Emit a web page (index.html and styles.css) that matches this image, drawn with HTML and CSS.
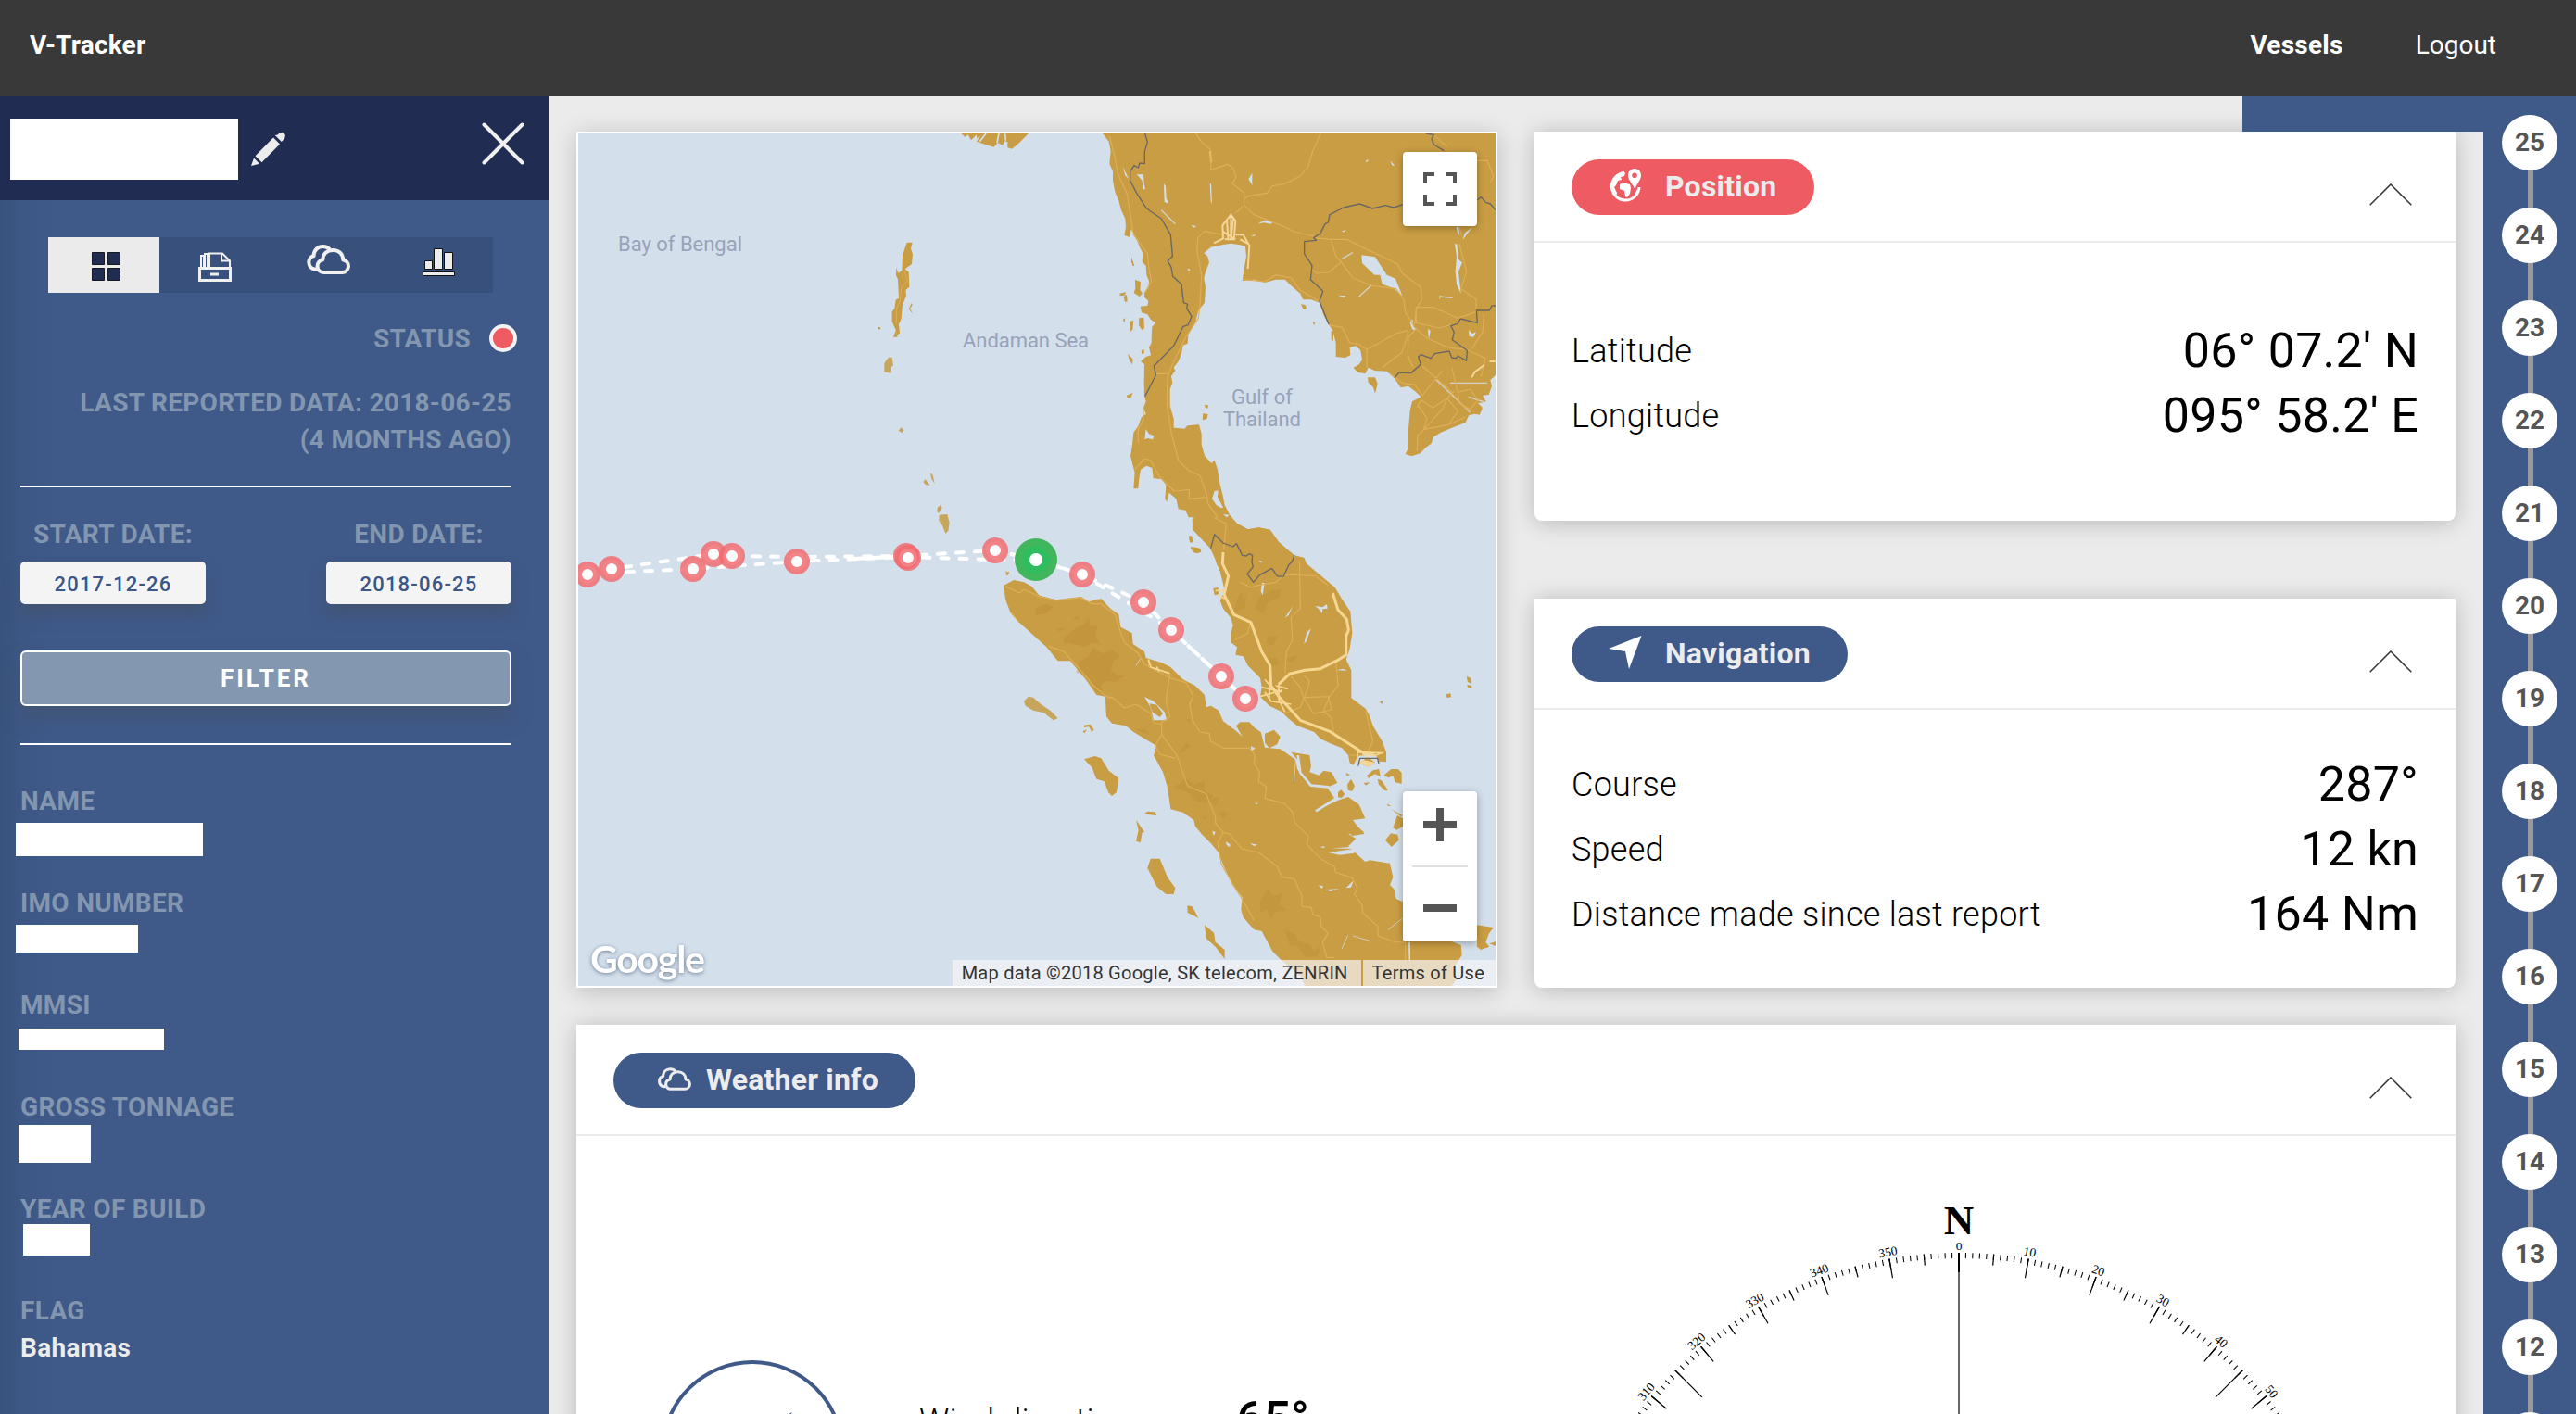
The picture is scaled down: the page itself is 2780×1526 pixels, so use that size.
FILE: index.html
```html
<!DOCTYPE html>
<html lang="en">
<head>
<meta charset="utf-8">
<title>V-Tracker</title>
<link rel="stylesheet" href="styles.css">
</head>
<body>
<svg class="defs" width="0" height="0" aria-hidden="true">
  <symbol id="clouds" viewBox="0 0 48 32">
    <path d="M12 26.500H9.500A7.500 7.500 0 0 1 8.500 12C8.800 6 13 2 18.500 2c3.200 0 5.800 1.200 7.500 3.500" fill="none" stroke="currentColor" stroke-width="4"/>
    <path d="M19 30a6.800 6.800 0 0 1-.8-13.500C18.500 10 23 6 29.500 6s10.500 4.500 10.800 10.500A6.800 6.800 0 0 1 39 30z" fill="none" stroke="currentColor" stroke-width="4" stroke-linejoin="round"/>
  </symbol>
  <symbol id="chevron" viewBox="0 0 46 24">
    <path d="M.7 23.300 23 1l22.300 22.300" fill="none" stroke="#333" stroke-width="1.500"/>
  </symbol>
</svg>

<header class="topbar">
  <span class="brand">V-Tracker</span>
  <nav class="topnav"><a class="active">Vessels</a><a>Logout</a></nav>
</header>

<div class="layout">
  <aside class="sidebar">
    <div class="side-head">
      <div class="blank vessel"></div>
      <svg class="pencil" viewBox="0 0 37 37"><path d="M28.500 3.500C32 .2 34 0 35.500 1.600c2 2 2 4.600-1.500 8.100l-1.200 1.400-7-7zM24 6.500l7 7-19.500 19.700-7-7zM3 28.500l6.200 6.200L0 37z" fill="#ececec"/></svg>
      <svg class="close" viewBox="0 0 46 46"><path d="M2.500 2.500l41 41M43.500 2.500l-41 41" stroke="#f0f0f0" stroke-width="4" stroke-linecap="round"/></svg>
    </div>
    <div class="tabs">
      <div class="tab on"><svg width="32" height="32" viewBox="0 0 32 32"><g fill="#212c52" stroke="#15181f"><path d="M.5.5h13v13H.5zM17.500.5h13v13h-13zM.5 17.500h13v13H.5zM17.500 17.500h13v13h-13z"/></g></svg></div>
      <div class="tab"><svg width="36" height="32" viewBox="0 0 36 32"><g fill="none" stroke="#f0f0f0" stroke-width="2"><path d="M1.500 17.500h33v13h-33zM13 24h9" stroke-width="3"/><path d="M3 17V4h3v13M7 17V2h3v15M12 17V1.500h14l8 8V17M25 1.500v8h8"/></g></svg></div>
      <div class="tab raised"><svg width="48" height="32"><use href="#clouds"/></svg></div>
      <div class="tab raised"><svg width="36" height="30" viewBox="0 0 36 30"><g fill="#ececec" stroke="#111"><path d="M2.500 13.500h8v9h-8zM12.500.5h9v22h-9zM23.500 4.500h9v18h-9zM.5 25.500h34v4H.5z"/></g></svg></div>
    </div>
    <div class="status"><span>STATUS</span><i class="dot"></i></div>
    <p class="reported">LAST REPORTED DATA: 2018-06-25<br>(4 MONTHS AGO)</p>
    <hr class="rule">
    <div class="dates">
      <div class="date"><span>START DATE:</span><div class="field">2017-12-26</div></div>
      <div class="date"><span>END DATE:</span><div class="field">2018-06-25</div></div>
    </div>
    <button class="filter">FILTER</button>
    <hr class="rule second">
    <dl class="facts">
      <div class="fact"><dt>NAME</dt><dd class="blank b-name"></dd></div>
      <div class="fact"><dt>IMO NUMBER</dt><dd class="blank b-imo"></dd></div>
      <div class="fact"><dt>MMSI</dt><dd class="blank b-mmsi"></dd></div>
      <div class="fact"><dt>GROSS TONNAGE</dt><dd class="blank b-gross"></dd></div>
      <div class="fact"><dt>YEAR OF BUILD</dt><dd class="blank b-year"></dd></div>
      <div class="fact"><dt>FLAG</dt><dd>Bahamas</dd></div>
    </dl>
  </aside>

  <main class="main">
    <div class="notch"></div>
    <section class="map">
      <svg class="chart" viewBox="624 144 990 920">
        <rect x="624" y="144" width="990" height="920" fill="#d3dfeb"/>
        <!-- Indochina, Andaman and the gulf -->
        <g transform="translate(1120 130) scale(.33333)">
          <g fill="#c99d43">
            <path d="M210 42 230 68 236 100 232 140 243 165 243 195 250 232 262 260 270 290 283 318 285 345 280 372 298 378 302 352 318 380 330 410 340 430 338 458 350 470 352 500 360 520 358 542 345 560 345 572 358 584 355 600 332 602 336 622 355 628 366 645 382 655 370 668 368 700 368 720 360 735 366 760 350 765 333 780 345 790 344 850 345 892 350 910 342 930 350 950 335 962 325 990 310 1010 306 1050 300 1085 306 1110 314 1140 310 1192 325 1192 328 1160 333 1130 352 1118 370 1125 374 1158 400 1162 415 1180 412 1225 418 1235 425 1205 448 1225 455 1258 478 1262 488 1285 505 1285 500 1320 520 1335 540 1360 558 1372 570 1395 580 1440H870L862 1418 830 1408 815 1395 780 1365 752 1325 715 1318 680 1324 645 1305 620 1275 605 1245 598 1210 590 1180 582 1130 572 1100 562 1110 540 1085 530 1050 530 1015 522 985 485 988 475 998 440 995 440 965 428 925 428 870 436 850 432 828 445 810 440 800 455 780 465 755 470 728 485 722 487 695 500 670 510 655 520 615 540 590 543 540 538 510 545 485 555 460 550 440 538 430 560 410 600 402 625 398 655 403 672 408 675 440 668 480 662 520 700 515 735 525 770 515 800 515 820 535 850 560 858 580 885 580 912 590 925 630 942 660 955 680 965 720 965 765 995 768 1012 760 1010 735 1030 730 1045 745 1050 775 1040 790 1022 800 1035 815 1060 820 1070 800 1090 810 1130 812 1155 835 1175 865 1200 860 1225 880 1240 895 1212 910 1205 940 1200 1000 1200 1060 1190 1080 1210 1087 1238 1078 1255 1060 1275 1045 1280 1025 1305 1010 1340 995 1385 978 1395 955 1415 950 1430 953 1440 930 1425 915 1452 912 1440 890 1460 888 1470 860 1465 840 1482 825V42z"/>
            <path d="M303 442l10 28-5 2-5-14zM315 515l18 8-2 25 8 12-10 10-18-12 5-15zM265 560l20-4-3 10-15 2zM278 570l10-6 2 22-8 2zM328 640l15-2 2 35-8 5-10-15zM300 650l10-3-3 30-8 8zM275 645l8-5-2 14zM292 755l16 18-2 18-12-22zM288 890l20-8-6 14-12 4zM335 745l8-4 2 12-8 4zM540 920l12 2-2 10-8-2zM535 948l16 4-4 14-14 4zM490 1345l8 0 4 18-6 5-6-12zM495 1380l30 5 4 12-16 3-15-10zM852 595l14 2 4 12-10 3zM890 652l8 2-4 10zM1068 832l24 0 8 20-8 32-6-20-16-16zM950 680l8 5-2 30-6-5z"/>
          </g>
          <g fill="#d3dfeb">
            <path d="M1048 436l44 6 38 58 28 12 22 56-30-26-35-12-7-30-18 0-40-38zM1350 400h7l5 50 12 10-12 30 8 70-14-30-4-40 4-50zM1355 345h8l2 28-6-10zM1407 346l-32 40 8-22zM556 100l5 0 2 35-5 0zM557 205l4 0 3 65-4-8zM682 190l12-20v40zM408 205l6 8 2 38 8 18-14-5zM320 175l22 0 2 30 4 18-8 0-2-28-10-12zM275 150l20 40-12-12zM572 1200l12-2-2 20 18 35-6 2-16-10-14-20zM600 1275l20 2-8 8zM350 1000l10 15 16 6-4 12-16-4-10 4zM712 335l20-12 28 4-4 8-25-4zM690 375l18-8-8 8zM495 338l18 4-6 5zM972 566l26 2-8 5zM985 358l14-4-10 8zM1140 130l16 16-8 0zM1062 130l10-4-8 10zM484 480l10 2-6 6zM1205 655l8-12 2 24 14 10-16 0zM1263 675l8 6-5 28zM1395 678l12 12 12-5-8 16-14-2zM1300 580l0-12 42 4v4l-38-4z"/>
            <path d="M400 290l45 45M984 448l36-20M1040 570l40-36M1290 840l110 105M1335 850h120M1395 895l60 20" stroke="#d3dfeb" stroke-width="4" opacity=".8"/>
          </g>
          <g fill="none" stroke="#deaf56" stroke-width="3.500" stroke-linejoin="round">
            <path d="M232 50 250 120 258 170 290 240 300 310 310 370 355 430 360 480 368 520 345 560M512 42 530 70 560 95V160L615 142 632 155 642 182 630 205 668 235V275L640 300M668 275 700 305 800 345 830 360 895 375M668 255 680 245 742 235 760 212 800 205 850 180 875 150 890 100 915 42M600 370 540 358 518 380 515 420 530 500 525 600 520 640 480 700 460 740 440 780 420 830 418 920 432 1010 455 1100 490 1135 525 1150 548 1215 550 1240 582 1285M314 1130 345 1095 365 1100 395 1155 442 1200 490 1195V1225L548 1220M385 820H422M895 380 950 385 1000 385 1060 415 1165 465 1180 495 1240 540 1243 580 1225 610 1220 660M950 390 965 440 982 458 942 492 905 495 885 480M982 458 1020 510 1080 535 1160 545 1185 580 1190 620 1220 670 1260 705 1330 735 1390 742M1200 680 1160 690 1065 742V800M1200 685 1180 750 1115 800M1225 675 1200 700 1198 760 1215 800M1365 400 1388 490 1370 545 1420 580 1418 620 1360 640 1280 605 1225 605 1225 655 1300 672 1340 660M665 515 735 522 770 500 820 510 850 550 910 585M942 662 985 670 1010 720 1040 725 1065 742M1245 795 1330 870 1400 950M1140 820 1180 850 1220 855 1245 890 1310 810M1228 930 1240 905 1280 930 1325 900 1350 875M1228 1070 1230 1020 1250 1000 1330 985 1385 960M1250 1000 1310 935 1325 900 1360 940 1330 985M1230 920 1260 965 1250 1000M1360 880l40-10 25 35-25 30-35-20zM1360 880l-20-80M1385 740l65 30-15 60M1445 625l-5 60-35 55M1350 300 1372 370M1410 130l45 0 20 50-10 20M1285 50l40 35M342 935V970L325 1000V1045M570 1285 610 1305 600 1400"/>
          </g>
          <path d="M570 397 600 382 598 340 625 305 640 325 635 385H605M625 305V385M612 320l4 62M632 320l-6 60M600 360l40 25M640 370 665 370 685 405 680 480M655 385l28 15M1405 832l10-18 30-22M1462 780h20M600 1398v42" fill="none" stroke="#f5d69a" stroke-width="6"/>
          <path d="M347 42 355 70 346 100V140L330 138 325 153 312 146 299 165V195L320 235 352 285 400 318 430 370 436 440 420 455 432 475 437 505 465 530 472 590 485 595 482 608 498 635 486 662 470 668 440 730 376 795 382 825 347 893M1182 272 1153 282 1125 275 1084 285 1042 270 990 282 945 305 940 330 930 335 915 365 893 380 902 388 863 392V432L888 470 883 515 923 553 912 585 942 660M1257 42 1282 46 1275 60 1282 78 1315 98M1422 258 1435 248 1450 265 1465 270 1482 290M1482 600H1470L1462 615H1420L1423 655 1368 642 1360 658 1337 665 1348 685 1342 710 1390 745 1388 778 1360 762 1355 770 1340 768 1332 747 1285 755 1273 770 1240 758 1232 765 1240 790 1208 818 1170 816 1155 833" fill="none" stroke="#6b6762" stroke-width="4" stroke-linejoin="round"/>
        </g>
        <!-- Andaman and Nicobar islands -->
        <g transform="translate(610 130) scale(.33333)" fill="#c99d43">
          <path d="M1282 42l12 12 10-8 10 18 18-18 0 12 12-10-12 20 22 8 34 10 12-14 16 8 8-14 8 4v18l14 4 22-18 32-32z"/>
          <path d="M1342 68l20-26M1398 72l6-30M1426 65l-2-22" stroke="#d3dfeb" stroke-width="5"/>
          <path d="M1106 395h18l-5 20 6 18-3 32-22 16 12 10 2 48-12 10 2 18-12 30-4 45-8 18 3 28-8 8-6-20-11-25v-32l8-10 4-28 10-6-3-60-6-14 1-25 6 18 12-8 2-50zM1070 680l6 21h-14zM1122 590l-10 20 14 18-10-20 8-10zM1012 669l9 0-2 8-7-2z"/>
          <path d="M1098 488l10 30-20 24-4 40-12 30 0 45" fill="none" stroke="#deaf56" stroke-width="3"/>
          <g fill="#c8a55c"><path d="M1050 766l8 2 4 25-6 5-1 20-22-3v-28l8-14zM1088 994l8 9-6 9-11-8zM1166 1162l15 20-14-3-8-8zM1182 1140l8 8 6 28-10-16zM1217 1245l3 10-10 16-7-5 3-14zM1211 1277l26-2 7 28-4 26-9 8-10-26-11-14z"/></g>
        </g>
        <!-- Malay peninsula and Sumatra -->
        <g transform="translate(1120 560) scale(.33333)">
          <g fill="#c99d43">
            <path d="M500 0 502 35 530 65 558 95 572 125 590 170 600 210 605 235 590 265 600 290 625 320 632 345 625 370V400L645 415 640 440 665 445 680 475 700 495 720 515 725 545 720 575 750 605 790 625 810 645 840 670 895 690 915 712 950 728 985 742 1005 765 1010 790 1022 797 1035 770 1060 760 1095 765 1105 785 1128 787V755L1115 720 1085 670 1075 640 1062 615 1015 580V490L998 455 1010 420 1018 370 1012 300 985 260 962 222 900 170 870 145 862 125 830 118 780 75 752 35 715 28 680 34 645 15 630 0z"/>
            <path d="M-110 215-78 198-45 205-20 218 5 248 60 262 140 252 165 268 205 258 235 290 262 310 268 350 305 370 308 405 345 430 350 450 400 465 430 480 470 520 510 540 540 570 545 610 560 605 585 620 600 655 640 685 662 705 642 670 655 658 685 658 700 675 722 690 735 740 785 745 835 780 840 810 880 865 940 870 965 905 900 945 975 910 1005 900 1040 925 1060 970 1020 975 1035 995 1055 1015 1005 1020 1030 1035 1005 1060 1060 1110 1075 1105 1140 1115 1150 1160 1140 1185 1155 1200 1160 1230 1182 1240V1365L1340 1368 1370 1380 1373 1412 1350 1450 1355 1490 1340 1512H865L850 1480 790 1430 760 1400 725 1335 700 1330 665 1290 658 1265 662 1225 630 1185 600 1120 585 1080 560 1050 530 1020 510 995 505 975 470 950 430 940 420 870 405 820 375 765 385 735 310 690 285 670 240 662 222 640 218 575 190 570 155 520 105 460 65 460 28 415-60 335-90 300-105 260zM568 225l16-3 2 22-14 3zM735 695l30-12 20 22-10 25-25 12-15-17zM820 755l60 10 5 35-5 20 30 10 15-15 25 5 20 35-30 13-55-8-35-40-5-35zM972 885l10-8 12 14-10 12-12-2zM1002 860l12-18 12 22-8 18-14-4zM1065 832l20-18 20-4 4 24-18-8-20 14zM1120 830l24-20 22 0 12 12v36l-22-6-5-20-16 6zM1100 842l12 4 22 32-10 2-20-20zM1055 855l20-2-12 10zM998 822l14 8-12 2zM1130 922l14 8-10 0zM1145 940l36 20-6 4zM1150 1000l14-40 18 10v25l-20 12zM1125 1040l18-22 22 4 4 18-24 22zM1005 1010h48l4 10-40 6zM1422 1315l53 8-15 20-10 28 12 14-28 10-12-10zM1462 1375l20-6v14zM1388 510l14 5 2 18-12-5zM1390 536l14 4 2 8-14-2zM1322 568l14-3 2 12-14 2zM1106 592l12-4-4 12zM490 55l10 5 0 16-8 0zM495 92l20 0 14 10-6 8-16 0z"/>
            <path d="M150 778 185 768 205 775 230 815 262 840 255 885 240 897 228 885 215 850 190 842 175 805zM345 955l10-8 25 2 5 12zM355 1130 365 1100 395 1100 420 1160 445 1195 440 1215H415L385 1190zM484 1252 500 1255 520 1292 485 1275zM540 1315 570 1340 575 1370 605 1395V1425L575 1385 545 1358zM318 975l28 40-8 0-6 33-14-5 8-35zM150 668l20-3 12 18-8 6-8-16-16 2zM145 688l14-6-8 12z"/>
            <path d="M-45 590-30 575-15 578 10 600 40 620 65 645 50 652 20 628-15 620-40 605zM-104 168l6 4 6-2-4 12h-6z" fill="#c8a55c"/>
          </g>
          <!-- relief shading -->
          <g fill="#bb8e38" opacity=".4">
            <path d="M85 385l35-30 30-15 15-22 5 28 25 0-8 30 14 30-36-6-14 14-30-16-36 6zM135 460l30-14 14-30 30 20 30-14 30 25-24 12-8 30 22 18 24 0-30 20-36-2-14 14 10 30-26-12-22-40-26-18-14 0zM-10 290l40-15 20 10-25 22-32 4zM60 355l30-3-20 14zM440 870l40-30 24 20 36-12-4 30 34 20-28 22-30-6-20-26-32-12zM530 960l16 6-6 10zM585 955l18-10 10 14-12 12zM550 910l40-12-16 32zM720 1235l26-40 12 26 36-10-12 35 22 22-36 4-12 20-14-28-22 12zM800 1330l36 16 6 20 36 10 16 22 24-16-14 34-36 4-26-36-26-4zM320 680l26 0 20 16-30-4zM635 300l10-40 14-24 6 24 10-10-4 40zM700 290l20-40 40-18 30-5-10 28-34 14-14 36zM740 380l36 0-14 30-20-4zM800 455l40-14-14 24zM750 450l24 0 4 22-24 6zM455 760l24-34 16 10-24 20zM480 650l20-4-8 16z"/>
            <path d="M95 400l30-8 24 12 14-22 10 20-20 12zM150 470l22-16 10 20 26-10-8 24 30 4-24 18-22-14-14 10zM0 300l20-16 10 14zM110 325l20-12 6 12z"/>
          </g>
          <g fill="#d3dfeb">
            <path d="M345 576 375 590 410 625 418 652 375 652 365 610zM722 235l4-28 8 0-6 40zM800 320l26-38-14 30zM862 405l8-36 14-14-14 40zM898 282l24 4 14-10 2 14-16 2-2 14-8-12zM716 134l14 5-10 2zM968 490l20-5 14 6zM940 1080l85-12 0 14-48 6zM950 1066l66-4v6zM912 1062l16-2 0 6zM908 1185l16 4-4 8zM930 1200l44-2-26 8zM998 1195l24-24-8 22zM686 1050l26 5-12 4zM608 1045l14 8 0 10-10-6zM565 1010l10 4-6 12zM690 735l14 8-12 8zM700 920h14l-4 4zM1200 1370h6v60h-4z"/>
            <path d="M835 780l-6 70M318 475l14-22M984 1392l20-44M1020 1350l60 18M1134 1330l46-36" stroke="#d3dfeb" stroke-width="3" opacity=".7"/>
            <path d="M842 765 850 822 885 863 940 868 966 905 900 946" fill="none" stroke="#d3dfeb" stroke-width="8"/>
          </g>
          <path d="M362 598 385 602 405 630 395 642 370 625zM1040 790 1068 772 1092 788 1070 803z" fill="#c99d43"/>
          <path d="M1040 790 1052 780 1092 788 1070 803z" fill="#f5d69a"/>
          <g fill="none" stroke="#deaf56" stroke-width="3.500" stroke-linejoin="round">
            <path d="M-105 218-60 240-45 228-30 235 5 252 60 264 140 255 175 275 205 275 250 310 262 350 280 400 325 435 345 470 428 515 480 530 503 572 492 600 500 650 525 690 555 695 560 720 600 742H685L703 765 700 790 718 820 715 850 740 868 735 905 800 922 825 950 833 985 877 1028 870 1052 915 1100 960 1125 965 1145 1018 1162 1035 1195 1025 1215 1050 1250 1052 1275 1100 1318 1102 1350 1150 1368 1190 1372V1430M428 500 415 590 428 640 400 660 402 700 450 765 485 865 545 890 575 965 575 985 600 1015 620 1020 660 1068 715 1080 775 1125 790 1160 830 1165 855 1220V1255L885 1258 890 1280 915 1290 918 1320 940 1342 922 1370 935 1420 960 1420M-60 335-90 300M35 412 85 430 130 480 180 540 222 575 245 580 280 612 318 600 365 630 375 660 400 665M400 700 380 735 395 762 445 775M600 1015 582 1050 595 1120 630 1180 670 1245 700 1300M360 460l-2 20 70 20M655 205 690 222 715 215 770 205 800 180 900 185 940 215M848 135V180L850 290 820 320 825 390 805 430 800 500M848 180V135M690 330 680 370 640 390M965 460 972 540 945 575 860 578 850 545 820 510M860 505l20 20-8 30-10 25 30 50 60-12-12-44M862 580 850 610 800 630M945 575 925 620 950 645 958 690M1062 620 1075 680 1085 720 1070 750M578 0 610 15 602 100M1005 765h50"/>
          </g>
          <g fill="none" stroke="#f6d792" stroke-linejoin="round">
            <path d="M600 108 598 145 617 185 603 245 635 310 690 335 725 430 752 475 755 540 780 575 850 652 945 688 1050 755 1090 765M780 535 815 502 865 490 915 485 970 458 998 440V380L1006 360 1000 325 972 295 955 240" stroke-width="9"/>
            <path d="M575 232 610 232M582 245 604 258M358 455l8 25 60 20M385 478l8 16M735 520l50 60M725 545l65 15M720 575l70-20M735 560l20 30 65 10M780 535v50l20 40M750 520v60M770 540l40 10M1035 785V755L1115 758M1085 768l35-12M1042 750l30 25" stroke-width="5"/>
          </g>
          <path d="M560 95 572 50 600 78 632 90 643 80 662 118 675 120 685 113 695 118 693 140 697 155 678 178 698 205 718 182 758 160 775 185 795 187 812 150 825 135 830 118M1037 800 1043 775H1100L1104 792" fill="none" stroke="#6b6762" stroke-width="4" stroke-linejoin="round"/>
        </g>

        <g class="sea">
          <text x="667" y="271" textLength="134">Bay of Bengal</text>
          <text x="1039" y="375" textLength="136">Andaman Sea</text>
          <text x="1329" y="436" textLength="66">Gulf of</text>
          <text x="1320" y="460" textLength="84">Thailand</text>
        </g>

        <g fill="none" stroke="#fff" stroke-width="4" stroke-linecap="round">
          <path stroke-dasharray="8 12" d="M634 620 660 614 770 598 790 600 860 601 977 600 1074 594 1118 604"/>
          <path stroke-dasharray="8 12" stroke-dashoffset="4" d="M660 618 748 614 860 606 980 601 1074 604 1118 604"/>
          <path stroke-dasharray="8 12" d="M1118 604 1168 620 1234 650 1264 680 1318 730 1344 754"/>
          <path stroke-dasharray="8 12" stroke-dashoffset="9" d="M1118 604 1168 620 1200 640 1240 664 1264 680 1318 730 1344 754"/>
          <path d="M920 603 976 600.500"/>
        </g>
        <g class="fixes">
          <circle cx="634" cy="620" r="10"/><circle cx="660" cy="614" r="10"/><circle cx="748" cy="614" r="10"/><circle cx="770" cy="598" r="10"/><circle cx="790" cy="600" r="10"/><circle cx="860" cy="606" r="10"/><circle cx="978" cy="600" r="10"/><circle cx="980" cy="602" r="10"/><circle cx="1074" cy="594" r="10"/><circle cx="1168" cy="620" r="10"/><circle cx="1234" cy="650" r="10"/><circle cx="1264" cy="680" r="10"/><circle cx="1318" cy="730" r="10"/><circle cx="1344" cy="754" r="10"/>
        </g>
        <circle cx="1118" cy="604" r="23" fill="#41b65d"/><circle cx="1118" cy="604" r="15" fill="#30bd60"/><circle cx="1118" cy="604" r="7" fill="#fff"/>
        <text class="glogo" x="637" y="1050" textLength="124">Google</text>
      </svg>
      <div class="map-btn full"><svg width="36" height="36" viewBox="0 0 36 36"><path d="M2 12V2h10M24 2h10v10M34 24v10H24M12 34H2V24" fill="none" stroke="#555" stroke-width="4"/></svg></div>
      <div class="map-btn zoom">
        <svg width="36" height="36" viewBox="0 0 36 36"><path d="M0 18h36M18 0v36" stroke="#555" stroke-width="8"/></svg>
        <i></i>
        <svg width="36" height="36" viewBox="0 0 36 36"><path d="M0 18h36" stroke="#555" stroke-width="8"/></svg>
      </div>
      <div class="credits"><span>Map data ©2018 Google, SK telecom, ZENRIN</span><span>Terms of Use</span></div>
    </section>

    <div class="stack">
      <section class="card">
        <div class="card-head">
          <div class="pill red">
            <svg width="36" height="36" viewBox="0 0 36 36"><g fill="none" stroke="#fff"><path d="M17 4.500A14.800 14.800 0 1 0 33 20" stroke-width="3"/></g><path d="M4 12l6-5 8-3-1 4-4 1 1 3-4 1-2 5-2 2 3 6-1 5-3-3-3-8zM12 17l4-2 3 1 4 1 1 4-1 6-3 4-2-1-1-6-5-2zM31 22l-4 9 4-5z" fill="#fff"/><path fill-rule="evenodd" d="M28 0a7 7 0 0 1 7 7.200C35 12 30 17 28.500 22 26 17 21 12 21 7.200A7 7 0 0 1 28 0zm0 4.500a2.800 2.800 0 1 0 0 5.600 2.800 2.800 0 0 0 0-5.600z" fill="#fff"/></svg>
            <span>Position</span>
          </div>
          <svg class="chev"><use href="#chevron"/></svg>
        </div>
        <div class="rows">
          <div class="row"><span>Latitude</span><b>06° 07.2' N</b></div>
          <div class="row"><span>Longitude</span><b>095° 58.2' E</b></div>
        </div>
      </section>
      <section class="card">
        <div class="card-head">
          <div class="pill">
            <svg width="36" height="36" viewBox="0 0 36 36"><path d="M35.500 0 22 36l-4-19L0 14z" fill="#fff"/></svg>
            <span>Navigation</span>
          </div>
          <svg class="chev"><use href="#chevron"/></svg>
        </div>
        <div class="rows">
          <div class="row"><span>Course</span><b>287°</b></div>
          <div class="row"><span>Speed</span><b>12 kn</b></div>
          <div class="row"><span>Distance made since last report</span><b>164 Nm</b></div>
        </div>
      </section>
    </div>

    <section class="card weather">
      <div class="card-head">
        <div class="pill cloudy">
          <svg width="37" height="25"><use href="#clouds"/></svg>
          <span>Weather info</span>
        </div>
        <svg class="chev"><use href="#chevron"/></svg>
      </div>
      <div class="weather-body">
        <div class="gauge"><svg width="200" height="200" viewBox="0 0 200 200"><circle cx="100" cy="100" r="97" fill="none" stroke="#3f5989" stroke-width="4"/><path d="M143 57 90 150 84 116 50 110z" fill="#3f5989"/></svg></div>
        <span class="wind-label">Wind direction</span>
        <b class="wind-value">65°</b>
        <svg class="compass" width="980" height="980" viewBox="-490 -490 980 980">
          <g fill="none" stroke="#000" transform="rotate(-90)">
            <circle r="430" stroke-width="6" pathLength="3600" stroke-dasharray="1.400 8.600" stroke-dashoffset=".7"/>
            <circle r="427" stroke-width="12" pathLength="3600" stroke-dasharray="1.600 48.400" stroke-dashoffset=".8"/>
            <circle r="422.500" stroke-width="21" pathLength="3600" stroke-dasharray="1.600 98.400" stroke-dashoffset=".8"/>
            <circle r="412.500" stroke-width="41" pathLength="3600" stroke-dasharray="1.600 898.400" stroke-dashoffset="450.800"/>
          </g>
          <path d="M0-433V0" stroke="#666" stroke-width="2"/><path d="M0-433V-412" stroke="#000" stroke-width="2"/>
          <text class="north" y="-453">N</text>
          <g class="deg">
            <text y="-436">0</text>
            <text y="-436" transform="rotate(10)">10</text>
            <text y="-436" transform="rotate(20)">20</text>
            <text y="-436" transform="rotate(30)">30</text>
            <text y="-436" transform="rotate(40)">40</text>
            <text y="-436" transform="rotate(50)">50</text>
            <text y="-436" transform="rotate(-50)">310</text>
            <text y="-436" transform="rotate(-40)">320</text>
            <text y="-436" transform="rotate(-30)">330</text>
            <text y="-436" transform="rotate(-20)">340</text>
            <text y="-436" transform="rotate(-10)">350</text>
          </g>
        </svg>
      </div>
    </section>
  </main>

  <nav class="timeline">
    <a>25</a><a>24</a><a>23</a><a>22</a><a>21</a><a>20</a><a>19</a><a>18</a><a>17</a><a>16</a><a>15</a><a>14</a><a>13</a><a>12</a><a>11</a>
  </nav>
</div>
</body>
</html>
```
FILE: styles.css
```css
* { box-sizing: border-box; }
body {
  margin: 0;
  width: 2780px;
  height: 1526px;
  overflow: hidden;
  display: flex;
  flex-direction: column;
  background: #ebebeb;
  font-family: Roboto, "Liberation Sans", sans-serif;
  font-size: 28px;
  color: #000;
}
svg { display: block; flex: none; }
.defs { position: absolute; }

.topbar {
  height: 104px;
  flex: none;
  display: flex;
  justify-content: space-between;
  padding: 29px 86px 0 32px;
  background: #393939;
  color: #fff;
  line-height: 40px;
}
.brand { font-weight: 700; letter-spacing: .2px; }
.topnav { display: flex; gap: 78px; }
.topnav .active { font-weight: 700; letter-spacing: .25px; }

.layout { flex: 1; min-height: 0; display: flex; }

/* Sidebar */
.sidebar {
  width: 592px;
  flex: none;
  overflow: hidden;
  background: linear-gradient(90deg, #38537c 0, #3d5785 22px, #3f5989 62px);
}
.side-head {
  height: 112px;
  display: flex;
  align-items: flex-start;
  padding: 24px 26px 0 11px;
  background: #212c52;
}
.blank { background: #fff; }
.vessel { width: 246px; height: 66px; }
.pencil { width: 37px; height: 37px; margin: 14px 0 0 14px; }
.close { width: 46px; height: 46px; margin: 4px 0 0 auto; }
.tabs {
  display: flex;
  width: 480px;
  height: 60px;
  margin: 40px 0 0 52px;
  background: #37517c;
}
.tab {
  width: 120px;
  display: flex;
  justify-content: center;
  padding-top: 16px;
  color: #f0f0f0;
}
.tab.on { background: #ebebeb; padding-left: 5px; }
.tab.raised:nth-child(3) { padding-top: 8px; padding-left: 4px; }
.tab.raised:nth-child(4) { padding-top: 12px; padding-left: 4px; }
.status {
  display: flex;
  justify-content: flex-end;
  align-items: center;
  gap: 20px;
  height: 40px;
  margin: 29px 34px 0 0;
  font-weight: 700;
  letter-spacing: .3px;
  color: #8296b0;
}
.dot {
  width: 30px;
  height: 30px;
  border: 4px solid #f3f3f3;
  border-radius: 50%;
  background: #ee5b62;
}
.reported {
  margin: 30px 40px 0 0;
  text-align: right;
  line-height: 40px;
  font-weight: 700;
  letter-spacing: .3px;
  color: #8296b0;
}
.rule {
  height: 2px;
  margin: 29px 40px 0 22px;
  border: 0;
  background: #fff;
}
.dates {
  display: flex;
  justify-content: space-between;
  margin: 31px 40px 0 22px;
}
.date {
  width: 200px;
  text-align: center;
  line-height: 40px;
  font-weight: 700;
  letter-spacing: .3px;
  color: #8296b0;
}
.field {
  height: 46px;
  margin-top: 9px;
  line-height: 49px;
  font-size: 22px;
  font-weight: 500;
  letter-spacing: 1.200px;
  color: #3a5586;
  background: #f4f4f4;
  border-radius: 5px;
  box-shadow: 0 12px 16px rgba(66, 84, 112, .8);
}
.filter {
  display: block;
  width: 530px;
  height: 60px;
  margin: 50px 0 0 22px;
  padding: 0;
  border: 2px solid #fff;
  border-radius: 6px;
  background: #8497b0;
  box-shadow: 0 12px 20px rgba(66, 84, 112, .8);
  font: 700 26px/56px Roboto, sans-serif;
  letter-spacing: 2.900px;
  color: #fff;
}
.rule.second { margin-top: 40px; }
.facts { margin: 41px 0 0 22px; }
.fact { height: 110px; font-weight: 700; line-height: 40px; letter-spacing: .3px; }
.fact dt { color: #8296b0; }
.fact dd { margin: 0; color: #ececec; }
.fact .b-name { width: 202px; height: 36px; margin: 3px 0 0 -5px; }
.fact .b-imo { width: 132px; height: 30px; margin: 3px 0 0 -5px; }
.fact .b-mmsi { width: 157px; height: 23px; margin: 5px 0 0 -2px; }
.fact .b-gross { width: 78px; height: 41px; margin: -1px 0 0 -2px; }
.fact .b-year { width: 72px; height: 34px; margin: -4px 0 0 3px; }

/* Content */
.main {
  position: relative;
  flex: 1;
  display: grid;
  grid-template-columns: 994px 994px;
  grid-template-rows: 924px 1fr;
  gap: 40px;
  padding: 38px 30px 0;
  overflow: hidden;
}
.notch {
  position: absolute;
  z-index: 1;
  top: 0;
  right: 0;
  width: 260px;
  height: 38px;
  background: #3f5989;
}
.map {
  position: relative;
  border: 2px solid #fff;
  box-shadow: 0 4px 24px rgba(0, 0, 0, .2);
}
.chart { width: 990px; height: 920px; }
.sea { font-size: 22px; fill: #98a3ba; }
.fixes circle { fill: #fff; fill-opacity: .88; stroke: #f06a6f; stroke-width: 8; stroke-opacity: .83; }
.glogo {
  font: 700 41px Lato, sans-serif;
  fill: #fff;
  filter: drop-shadow(0 1px 2px rgba(70, 85, 110, .7));
}
.map-btn {
  position: absolute;
  right: 20px;
  width: 80px;
  display: flex;
  flex-direction: column;
  align-items: center;
  background: #fff;
  border-radius: 4px;
  box-shadow: 0 2px 8px rgba(0, 0, 0, .3);
}
.full { top: 20px; height: 80px; padding-top: 22px; }
.zoom { top: 710px; height: 162px; padding-top: 18px; gap: 26px; }
.zoom i { width: 60px; height: 2px; background: #dfdfdf; }
.credits {
  position: absolute;
  right: 0;
  bottom: 0;
  display: flex;
  gap: 2px;
  font-size: 20px;
  line-height: 28px;
  letter-spacing: .250px;
  color: #333;
}
.credits span { height: 28px; padding: 0 14px 0 10px; background: rgba(245, 243, 245, .7); }
.credits span:last-child { padding-right: 12px; }

.stack { display: grid; grid-template-rows: 420px 420px; gap: 84px; }
.card {
  background: #fff;
  border-radius: 0 0 8px 8px;
  box-shadow: 0 2px 24px rgba(0, 0, 0, .22);
}
.card-head {
  height: 120px;
  display: flex;
  justify-content: space-between;
  padding: 30px 47px 0 40px;
  border-bottom: 2px solid #ebebeb;
}
.pill {
  height: 60px;
  display: flex;
  padding: 10px 40px 0 40px;
  gap: 25px;
  border-radius: 30px;
  background: #3f5989;
  color: #ececec;
  font-size: 32px;
  font-weight: 700;
  line-height: 38px;
  letter-spacing: .200px;
}
.pill.red { background: #ee5b62; padding-right: 41px; }
.pill.cloudy { padding-left: 47px; gap: 16px; }
.pill.cloudy svg { margin-top: 6px; }
.chev { width: 46px; height: 24px; margin-top: 26px; }
.rows { padding: 82px 40px 0; }
.card:nth-child(2) .rows { padding-top: 46px; }
.row {
  height: 70px;
  display: flex;
  justify-content: space-between;
  line-height: 70px;
  font-size: 36px;
  letter-spacing: .270px;
}
.row span { font-weight: 300; }
.row b { font-size: 52px; font-weight: 400; }

.weather { grid-column: 1 / 3; height: 1000px; }
.weather-body { display: flex; align-items: flex-start; padding: 0 46px 0 90px; }
.gauge { margin-top: 241px; }
.wind-label { margin: 285px 0 0 80px; font-size: 36px; font-weight: 300; line-height: 46px; letter-spacing: .270px; white-space: nowrap; }
.wind-value { margin: 276px 0 0 auto; padding-right: 211px; font-size: 52px; font-weight: 500; line-height: 60px; }
.compass { margin-top: 69px; overflow: visible; }
.compass text { font-family: "Liberation Serif", serif; text-anchor: middle; }
.north { font-size: 45px; font-weight: 700; }
.deg { font-size: 13.500px; }

/* Voyage timeline */
.timeline {
  width: 100px;
  flex: none;
  display: flex;
  flex-direction: column;
  align-items: center;
  gap: 40px;
  padding-top: 20px;
  background: linear-gradient(#999, #999) 48px 20px / 6px 100% no-repeat, #3f5989;
}
.timeline a {
  width: 60px;
  height: 60px;
  flex: none;
  border-radius: 50%;
  background: #fff;
  color: #555;
  font-weight: 700;
  line-height: 60px;
  text-align: center;
}
```
